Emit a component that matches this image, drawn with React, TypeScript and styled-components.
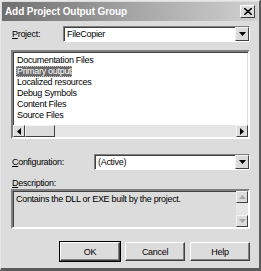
import styled, { createGlobalStyle } from 'styled-components';

const GlobalStyle = createGlobalStyle`
  html, body {
    margin: 0;
    padding: 0;
    background: #ffffff;
  }
  body {
    font-family: 'Liberation Sans', Arial, sans-serif;
    font-size: 9px;
    letter-spacing: -0.3px;
  }
`;

const outputs = [
  'Documentation Files',
  'Primary output',
  'Localized resources',
  'Debug Symbols',
  'Content Files',
  'Source Files',
];

const ArrowDown = () => (
  <svg width="7" height="4" viewBox="0 0 7 4">
    <path d="M0 0h7L3.5 4z" fill="#000" />
  </svg>
);

const App = () => {
  return (
    <>
      <GlobalStyle />
      <Window>
        <TitleBar>
          <Title>Add Project Output Group</Title>
          <CloseButton>
            <svg width="8" height="7" viewBox="0 0 8 7">
              <path d="M0 0l8 7M8 0L0 7" stroke="#000" strokeWidth="1.6" />
            </svg>
          </CloseButton>
        </TitleBar>
        <Body>
          <FieldRow>
            <Label $width={51}>
              <u>P</u>roject:
            </Label>
            <Combo>
              <ComboText>FileCopier</ComboText>
              <DropButton>
                <ArrowDown />
              </DropButton>
            </Combo>
          </FieldRow>

          <ListBox>
            <ListItems>
              {outputs.map(item => (
                <ListItem key={item} $selected={item === 'Primary output'}>
                  {item}
                </ListItem>
              ))}
            </ListItems>
            <HScroll>
              <ScrollButton>
                <svg width="4" height="7" viewBox="0 0 4 7">
                  <path d="M4 0v7L0 3.5z" fill="#000" />
                </svg>
              </ScrollButton>
              <Thumb />
              <Track />
              <ScrollButton>
                <svg width="4" height="7" viewBox="0 0 4 7">
                  <path d="M0 0v7L4 3.5z" fill="#000" />
                </svg>
              </ScrollButton>
            </HScroll>
          </ListBox>

          <FieldRow $top={15}>
            <Label $width={82}>
              <u>C</u>onfiguration:
            </Label>
            <Combo>
              <ComboText>(Active)</ComboText>
              <DropButton>
                <ArrowDown />
              </DropButton>
            </Combo>
          </FieldRow>

          <Caption>
            <u>D</u>escription:
          </Caption>
          <DescBox>
            <DescText>Contains the DLL or EXE built by the project.</DescText>
            <VScroll>
              <ScrollButton $disabled>
                <svg width="7" height="4" viewBox="0 0 7 4">
                  <path d="M0 4h7L3.5 0z" fill="#a8a8a8" />
                </svg>
              </ScrollButton>
              <Track />
              <ScrollButton $disabled>
                <svg width="7" height="4" viewBox="0 0 7 4">
                  <path d="M0 0h7L3.5 4z" fill="#a8a8a8" />
                </svg>
              </ScrollButton>
            </VScroll>
          </DescBox>

          <ButtonRow>
            <Button $default>OK</Button>
            <Button>Cancel</Button>
            <Button>Help</Button>
          </ButtonRow>
        </Body>
      </Window>
    </>
  );
};

export default App;

const Window = styled.div`
  box-sizing: border-box;
  width: 261px;
  height: 271px;
  background: #dcdcdc;
  border-top: 1px solid #e8e8e8;
  border-left: 1px solid #e8e8e8;
  border-right: 2px solid #5a5a5a;
  border-bottom: 3px solid #5a5a5a;
  display: flex;
  flex-direction: column;
  color: #000;
`;

const TitleBar = styled.div`
  height: 19px;
  margin: 1px 1px 0 1px;
  display: flex;
  align-items: center;
  justify-content: space-between;
  padding: 0 3px 0 3px;
  background: linear-gradient(to right, #6e6e6e 0%, #a4a4a4 50%, #d0d0d0 100%);
`;

const Title = styled.div`
  color: #fff;
  font-weight: bold;
  font-size: 10px;
  letter-spacing: -0.1px;
`;

const CloseButton = styled.div`
  box-sizing: border-box;
  width: 15px;
  height: 13px;
  background: #dcdcdc;
  border: 1px solid;
  border-color: #fff #404040 #404040 #fff;
  display: flex;
  align-items: center;
  justify-content: center;
`;

const Body = styled.div`
  display: flex;
  flex-direction: column;
  padding: 5px 9px 0 10px;
`;

const FieldRow = styled.div<{ $top?: number }>`
  display: flex;
  align-items: center;
  margin-top: ${p => p.$top ?? 0}px;
`;

const Label = styled.div<{ $width: number }>`
  width: ${p => p.$width}px;
  padding-left: 1px;
  flex-shrink: 0;
`;

const sunken = `
  box-sizing: border-box;
  border: 2px solid;
  border-color: #808080 #ffffff #ffffff #808080;
  box-shadow: inset 1px 1px 0 #404040, inset -1px -1px 0 #dcdcdc;
`;

const Combo = styled.div`
  ${sunken};
  flex: 1;
  height: 16px;
  background: #fff;
  display: flex;
  align-items: stretch;
  border-width: 1px;
  box-shadow: inset 1px 1px 0 #404040;
`;

const ComboText = styled.div`
  flex: 1;
  padding: 0 3px;
  line-height: 14px;
`;

const DropButton = styled.div`
  box-sizing: border-box;
  width: 14px;
  background: #dcdcdc;
  border: 1px solid;
  border-color: #f4f4f4 #404040 #404040 #f4f4f4;
  display: flex;
  align-items: center;
  justify-content: center;
`;

const ListBox = styled.div`
  ${sunken};
  margin-top: 8px;
  height: 89px;
  background: #fff;
  display: flex;
  flex-direction: column;
`;

const ListItems = styled.div`
  flex: 1;
  padding: 3px 0 0 3px;
  display: flex;
  flex-direction: column;
`;

const ListItem = styled.div<{ $selected?: boolean }>`
  height: 11px;
  line-height: 11px;
  padding: 0 1px;
  align-self: flex-start;
  background: ${p => (p.$selected ? '#6a6a6a' : 'transparent')};
  color: ${p => (p.$selected ? '#fff' : '#000')};
  outline: ${p => (p.$selected ? '1px dotted #c0c0c0' : 'none')};
  outline-offset: -1px;
`;

const HScroll = styled.div`
  height: 12px;
  display: flex;
  background: #e6e6e6;
`;

const ScrollButton = styled.div<{ $disabled?: boolean }>`
  box-sizing: border-box;
  width: 12px;
  height: 12px;
  flex-shrink: 0;
  background: #dcdcdc;
  border: 1px solid;
  border-color: #f4f4f4 #404040 #404040 #f4f4f4;
  display: flex;
  align-items: center;
  justify-content: center;
`;

const Thumb = styled.div`
  box-sizing: border-box;
  width: 30px;
  background: #dcdcdc;
  border: 1px solid;
  border-color: #f4f4f4 #404040 #404040 #f4f4f4;
`;

const Track = styled.div`
  flex: 1;
  background: #e6e6e6;
`;

const Caption = styled.div`
  margin-top: 8px;
  padding-left: 1px;
  line-height: 11px;
`;

const DescBox = styled.div`
  ${sunken};
  margin-top: 0;
  height: 40px;
  background: #dcdcdc;
  display: flex;
`;

const DescText = styled.div`
  flex: 1;
  padding: 3px 3px;
`;

const VScroll = styled.div`
  width: 12px;
  display: flex;
  flex-direction: column;
  background: #e6e6e6;
`;

const ButtonRow = styled.div`
  display: flex;
  justify-content: flex-end;
  gap: 5px;
  margin-top: 13px;
`;

const Button = styled.div<{ $default?: boolean }>`
  box-sizing: border-box;
  width: 60px;
  height: 19px;
  display: flex;
  align-items: center;
  justify-content: center;
  background: #dcdcdc;
  border: 1px solid;
  border-color: #ffffff #404040 #404040 #ffffff;
  box-shadow: ${p =>
    p.$default ? '0 0 0 1px #000, inset -1px -1px 0 #808080' : 'inset -1px -1px 0 #808080'};
`;
